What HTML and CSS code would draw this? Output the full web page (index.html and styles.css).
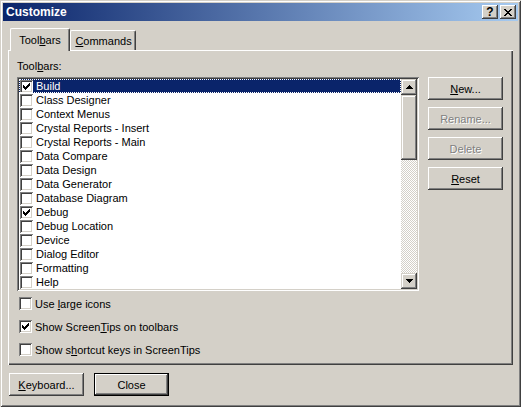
FILE: index.html
```html
<!DOCTYPE html>
<html>
<head>
<meta charset="utf-8">
<link rel="stylesheet" href="styles.css">
</head>
<body>
<div class="window">
  <div class="titlebar">
    <span class="title">Customize</span>
    <div class="tb-buttons">
      <span class="tb-btn help">?</span>
      <span class="tb-btn"><svg width="8" height="7" viewBox="0 0 8 7"><path d="M0 0h2v1h1v1h2v-1h1v-1h2v1h-1v1h-1v1h-1v1h1v1h1v1h1v1h-2v-1h-1v-1h-2v1h-1v1h-2v-1h1v-1h1v-1h1v-1h-1v-1h-1v-1h-1z" fill="#000"/></svg></span>
    </div>
  </div>
  <div class="content">
    <div class="tabs">
      <div class="tab active"><span>Tool<u>b</u>ars</span></div>
      <div class="tab"><span><u>C</u>ommands</span></div>
    </div>
    <div class="panel">
      <div class="label">Tool<u>b</u>ars:</div>
      <div class="main-row">
        <div class="listbox">
          <div class="items">
            <div class="item selected"><span class="cb"><svg width="7" height="7" viewBox="0 0 7 7"><path d="M0 2h1v3h-1zM1 3h1v3h-1zM2 4h1v3h-1zM3 3h1v3h-1zM4 2h1v3h-1zM5 1h1v3h-1zM6 0h1v3h-1z"/></svg></span><span>Build</span></div>
            <div class="item"><span class="cb"></span><span>Class Designer</span></div>
            <div class="item"><span class="cb"></span><span>Context Menus</span></div>
            <div class="item"><span class="cb"></span><span>Crystal Reports - Insert</span></div>
            <div class="item"><span class="cb"></span><span>Crystal Reports - Main</span></div>
            <div class="item"><span class="cb"></span><span>Data Compare</span></div>
            <div class="item"><span class="cb"></span><span>Data Design</span></div>
            <div class="item"><span class="cb"></span><span>Data Generator</span></div>
            <div class="item"><span class="cb"></span><span>Database Diagram</span></div>
            <div class="item"><span class="cb"><svg width="7" height="7" viewBox="0 0 7 7"><path d="M0 2h1v3h-1zM1 3h1v3h-1zM2 4h1v3h-1zM3 3h1v3h-1zM4 2h1v3h-1zM5 1h1v3h-1zM6 0h1v3h-1z"/></svg></span><span>Debug</span></div>
            <div class="item"><span class="cb"></span><span>Debug Location</span></div>
            <div class="item"><span class="cb"></span><span>Device</span></div>
            <div class="item"><span class="cb"></span><span>Dialog Editor</span></div>
            <div class="item"><span class="cb"></span><span>Formatting</span></div>
            <div class="item"><span class="cb"></span><span>Help</span></div>
          </div>
          <div class="scrollbar">
            <div class="sb-btn"><svg width="7" height="4" viewBox="0 0 7 4"><path d="M3 0h1v1h1v1h1v1h1v1H0V3h1V2h1V1h1z"/></svg></div>
            <div class="sb-thumb"></div>
            <div class="sb-track"></div>
            <div class="sb-btn"><svg width="7" height="4" viewBox="0 0 7 4"><path d="M0 0h7v1h-1v1h-1v1h-1v1h-1v-1h-1v-1h-1v-1h-1z"/></svg></div>
          </div>
        </div>
        <div class="side-buttons">
          <div class="btn"><span><u>N</u>ew...</span></div>
          <div class="btn disabled"><span>Rename...</span></div>
          <div class="btn disabled"><span>Delete</span></div>
          <div class="btn"><span><u>R</u>eset</span></div>
        </div>
      </div>
      <div class="options">
        <div class="option"><span class="cb"></span><span>Use <u>l</u>arge icons</span></div>
        <div class="option"><span class="cb"><svg width="7" height="7" viewBox="0 0 7 7"><path d="M0 2h1v3h-1zM1 3h1v3h-1zM2 4h1v3h-1zM3 3h1v3h-1zM4 2h1v3h-1zM5 1h1v3h-1zM6 0h1v3h-1z"/></svg></span><span>Show Screen<u>T</u>ips on toolbars</span></div>
        <div class="option"><span class="cb"></span><span>Show s<u>h</u>ortcut keys in ScreenTips</span></div>
      </div>
    </div>
    <div class="footer">
      <div class="btn"><span><u>K</u>eyboard...</span></div>
      <div class="btn default"><span>Close</span></div>
    </div>
  </div>
</div>
</body>
</html>
```

FILE: styles.css
```css
* { box-sizing: border-box; }
html, body { margin: 0; padding: 0; }
body {
  font-family: "Liberation Sans", Arial, sans-serif;
  font-size: 11px;
  color: #000;
  background: #d4d0c8;
}
u { text-decoration: underline; text-underline-offset: 1px; }

.window {
  width: 521px;
  height: 407px;
  background: #d4d0c8;
  padding: 3px;
  display: flex;
  flex-direction: column;
  box-shadow: inset 1px 1px #d4d0c8, inset -1px -1px #404040, inset 2px 2px #fff, inset -2px -2px #808080;
}

.titlebar {
  height: 18px;
  flex: none;
  background: linear-gradient(to right, #0a246a, #a6caf0);
  display: flex;
  align-items: center;
  justify-content: space-between;
  padding: 0 2px 0 2px;
}
.title {
  color: #fff;
  font-weight: bold;
  font-size: 12px;
  padding-left: 1px;
}
.tb-buttons { display: flex; gap: 2px; }
.tb-btn {
  width: 16px;
  height: 14px;
  background: #d4d0c8;
  display: flex;
  align-items: center;
  justify-content: center;
  box-shadow: inset -1px -1px #404040, inset 1px 1px #fff, inset -2px -2px #808080, inset 2px 2px #d4d0c8;
}
.tb-btn.help { font-weight: bold; font-size: 12px; line-height: 14px; }

.content {
  flex: 1;
  padding: 7px 5px 0 5px;
  display: flex;
  flex-direction: column;
}

.tabs {
  display: flex;
  align-items: flex-end;
  height: 22px;
  padding-left: 2px;
  position: relative;
  z-index: 2;
}
.tab {
  height: 20px;
  width: 66px;
  display: flex;
  align-items: center;
  justify-content: center;
  background: #d4d0c8;
  border-left: 1px solid #fff;
  border-top: 1px solid #fff;
  border-right: 1px solid #404040;
  border-radius: 2px 2px 0 0;
  box-shadow: inset -1px 0 #808080;
  padding: 1px 0 0 1px;
}
.tab.active {
  width: 60px;
  height: 23px;
  margin-bottom: -1px;
  padding: 0 0 1px 0;
}

.panel {
  height: 315px;
  flex: none;
  padding: 10px 9px 0 9px;
  box-shadow: inset 1px 1px #fff, inset -1px -1px #404040, inset -2px -2px #808080;
  position: relative;
  z-index: 1;
}
.label { height: 13px; line-height: 13px; margin-bottom: 4px; }

.main-row {
  display: flex;
  gap: 9px;
  align-items: flex-start;
}
.listbox {
  width: 402px;
  height: 214px;
  padding: 2px;
  display: flex;
  background: #fff;
  box-shadow: inset 1px 1px #808080, inset -1px -1px #fff, inset 2px 2px #404040, inset -2px -2px #d4d0c8;
}
.items { flex: 1; overflow: hidden; }
.item {
  height: 14px;
  display: flex;
  align-items: center;
  gap: 3px;
  padding-left: 1px;
  white-space: nowrap;
}
.item.selected {
  background: #0a246a;
  color: #fff;
  outline: 1px dotted #fff;
  outline-offset: -1px;
}

.cb {
  width: 13px;
  height: 13px;
  flex: none;
  background: #fff;
  display: flex;
  align-items: center;
  justify-content: center;
  box-shadow: inset 1px 1px #808080, inset -1px -1px #fff, inset 2px 2px #404040, inset -2px -2px #d4d0c8;
}
.cb svg { fill: #000; display: block; }

.scrollbar {
  width: 16px;
  display: flex;
  flex-direction: column;
}
.sb-btn {
  height: 16px;
  flex: none;
  background: #d4d0c8;
  display: flex;
  align-items: center;
  justify-content: center;
  box-shadow: inset -1px -1px #404040, inset 1px 1px #d4d0c8, inset -2px -2px #808080, inset 2px 2px #fff;
}
.sb-btn svg { fill: #000; display: block; }
.sb-thumb {
  height: 65px;
  flex: none;
  background: #d4d0c8;
  box-shadow: inset -1px -1px #404040, inset 1px 1px #d4d0c8, inset -2px -2px #808080, inset 2px 2px #fff;
}
.sb-track {
  flex: 1;
  background: repeating-conic-gradient(#d4d0c8 0 25%, #fff 0 50%) 0 0 / 2px 2px;
}

.side-buttons {
  display: flex;
  flex-direction: column;
  gap: 7px;
}
.btn {
  width: 75px;
  height: 23px;
  background: #d4d0c8;
  display: flex;
  align-items: center;
  justify-content: center;
  box-shadow: inset -1px -1px #404040, inset 1px 1px #fff, inset -2px -2px #808080, inset 2px 2px #d4d0c8;
}
.btn.disabled { color: #808080; text-shadow: 1px 1px 0 #fff; }
.btn.default {
  border: 1px solid #000;
}

.options {
  margin-top: 6px;
  padding-left: 2px;
  display: flex;
  flex-direction: column;
  gap: 10px;
}
.option {
  height: 13px;
  display: flex;
  align-items: center;
  gap: 3px;
  white-space: nowrap;
}

.footer {
  margin-top: 8px;
  padding-left: 1px;
  display: flex;
  gap: 10px;
}
```
